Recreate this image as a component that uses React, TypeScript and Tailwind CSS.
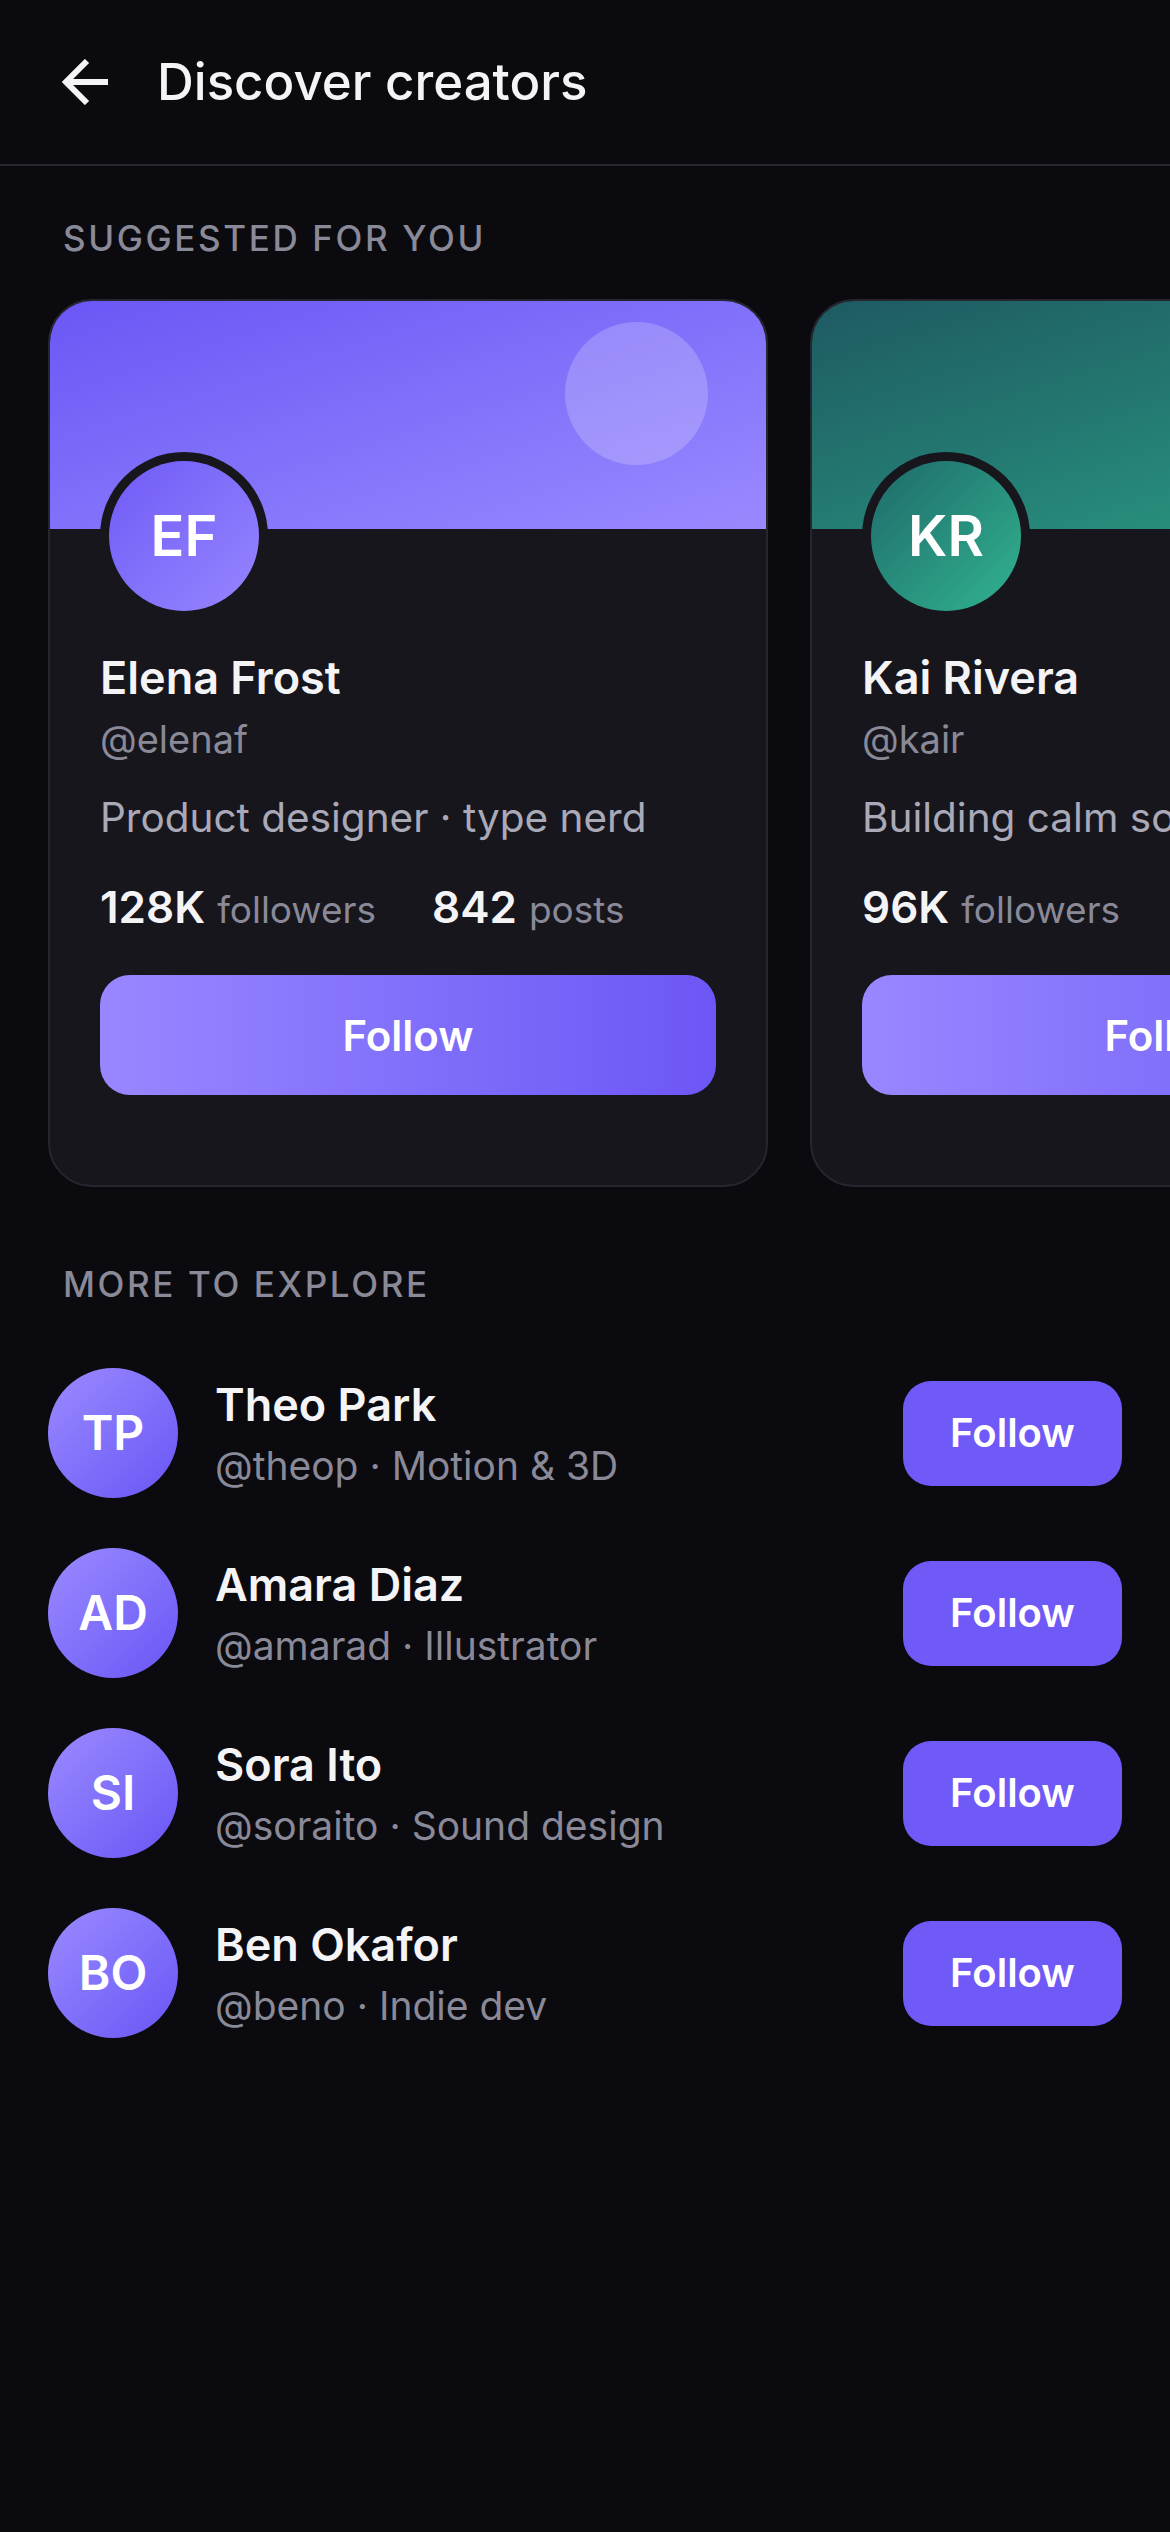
import React from 'react';

type Suggested = {
  initials: string;
  name: string;
  handle: string;
  bio: string;
  followers: string;
  posts: string;
  banner: string;
  avatar: string;
  bubble: boolean;
};

const suggested: Suggested[] = [
  {
    initials: 'EF',
    name: 'Elena Frost',
    handle: '@elenaf',
    bio: 'Product designer · type nerd',
    followers: '128K',
    posts: '842',
    banner: 'bg-linear-to-br from-[#6b56f5] to-[#9989ff]',
    avatar: 'bg-linear-to-br from-[#705af6] to-[#9686ff]',
    bubble: true,
  },
  {
    initials: 'KR',
    name: 'Kai Rivera',
    handle: '@kair',
    bio: 'Building calm software',
    followers: '96K',
    posts: '1.2K',
    banner: 'bg-linear-to-br from-[#1e5a62] to-[#2aa084]',
    avatar: 'bg-linear-to-br from-[#1f6a6a] to-[#31b48f]',
    bubble: false,
  },
];

const explore = [
  { initials: 'TP', name: 'Theo Park', handle: '@theop', tag: 'Motion & 3D' },
  { initials: 'AD', name: 'Amara Diaz', handle: '@amarad', tag: 'Illustrator' },
  { initials: 'SI', name: 'Sora Ito', handle: '@soraito', tag: 'Sound design' },
  { initials: 'BO', name: 'Ben Okafor', handle: '@beno', tag: 'Indie dev' },
];

function BackArrow() {
  return (
    <svg width="46" height="46" viewBox="0 0 46 46" fill="none" stroke="#f4f4f7" strokeWidth={6}>
      <path d="M46 23H4" />
      <path d="M25 2L4 23L25 44" strokeLinejoin="miter" />
    </svg>
  );
}

function SuggestedCard({ c }: { c: Suggested }) {
  return (
    <div className="w-[720px] shrink-0 overflow-hidden rounded-[44px] border-2 border-[#27262f] bg-[#17161d]">
      <div className={`relative h-[228px] ${c.banner}`}>
        {c.bubble && (
          <div className="absolute right-[58px] top-[21px] h-[143px] w-[143px] rounded-full bg-white/20" />
        )}
      </div>
      <div className="px-[50px] pb-[90px]">
        <div className="relative -mt-[77px] h-[168px] w-[168px] rounded-full bg-[#17161d] p-[9px]">
          <div
            className={`flex h-full w-full items-center justify-center rounded-full text-[56px] font-semibold text-white ${c.avatar}`}
          >
            {c.initials}
          </div>
        </div>
        <div className="mt-[30px] text-[45px] font-semibold leading-[56px] text-[#f4f4f7]">{c.name}</div>
        <div className="mt-[11px] text-[38px] leading-[44px] text-[#8a8998]">{c.handle}</div>
        <div className="mt-[35px] whitespace-nowrap text-[40.5px] leading-[44px] text-[#aaa9b7]">{c.bio}</div>
        <div className="mt-[41px] flex items-baseline gap-[56px] leading-[52px]">
          <div className="whitespace-nowrap">
            <span className="text-[44px] font-semibold text-[#f4f4f7]">{c.followers}</span>
            <span className="ml-[12px] text-[37px] text-[#8a8998]">followers</span>
          </div>
          <div className="whitespace-nowrap">
            <span className="text-[44px] font-semibold text-[#f4f4f7]">{c.posts}</span>
            <span className="ml-[12px] text-[37px] text-[#8a8998]">posts</span>
          </div>
        </div>
        <button className="mt-[32px] flex h-[120px] w-full items-center justify-center rounded-[30px] bg-linear-to-r from-[#9887ff] to-[#6c56f5] text-[42px] font-semibold text-white">
          Follow
        </button>
      </div>
    </div>
  );
}

export default function App() {
  return (
    <div className="min-h-screen w-full overflow-hidden bg-[#0b0a0f] font-['Inter',sans-serif]">
      <header className="flex h-[166px] items-center border-b-2 border-[#26252d] pl-[62px]">
        <BackArrow />
        <h1 className="ml-[49px] text-[51px] font-medium leading-[60px] text-[#f4f4f7]">Discover creators</h1>
      </header>

      <div className="mt-[52px] px-[63px] text-[35px] font-medium uppercase leading-[40px] tracking-[0.075em] text-[#8a8998]">
        Suggested for you
      </div>

      <div className="mt-[41px] flex gap-[42px] overflow-hidden pl-[48px]">
        {suggested.map((c) => (
          <SuggestedCard key={c.handle} c={c} />
        ))}
      </div>

      <div className="mt-[77px] px-[63px] text-[35px] font-medium uppercase leading-[40px] tracking-[0.075em] text-[#8a8998]">
        More to explore
      </div>

      <div className="mt-[64px] flex flex-col gap-[50px] px-[48px]">
        {explore.map((p) => (
          <div key={p.handle} className="flex h-[130px] items-center">
            <div className="flex h-[130px] w-[130px] shrink-0 items-center justify-center rounded-full bg-linear-to-br from-[#9b8aff] to-[#6a54f5] text-[48px] font-semibold text-white">
              {p.initials}
            </div>
            <div className="ml-[37px] flex-1">
              <div className="text-[45px] font-semibold leading-[52px] text-[#f4f4f7]">{p.name}</div>
              <div className="mt-[13px] text-[39px] leading-[44px] text-[#8a8998]">
                {p.handle} · {p.tag}
              </div>
            </div>
            <button className="flex h-[105px] w-[219px] items-center justify-center rounded-[28px] bg-[#6f59f7] text-[40px] font-semibold text-white">
              Follow
            </button>
          </div>
        ))}
      </div>
    </div>
  );
}
